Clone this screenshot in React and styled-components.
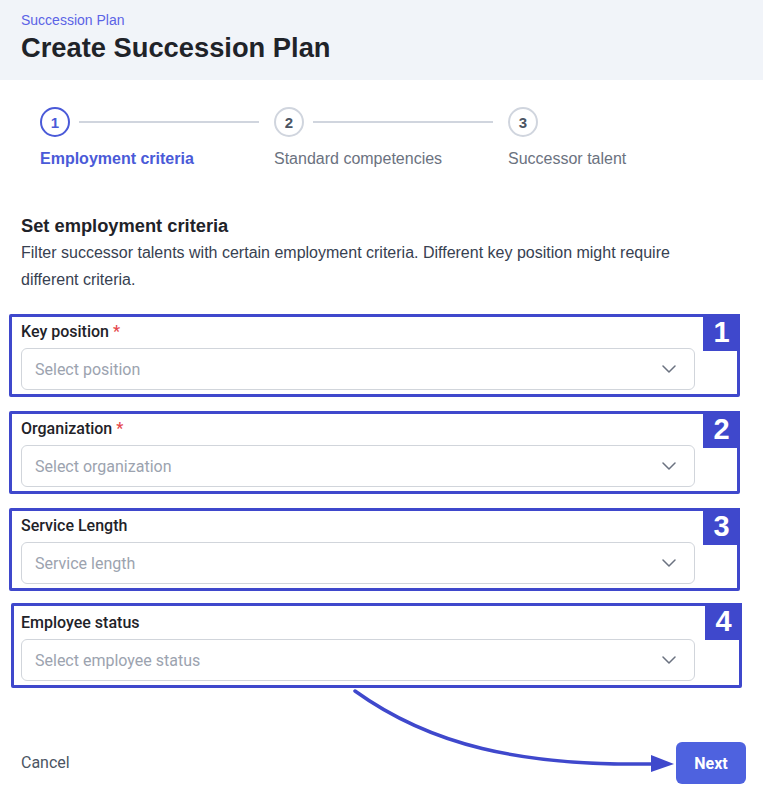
import React from "react";
import styled, { createGlobalStyle } from "styled-components";

const Global = createGlobalStyle`
  html, body { margin: 0; padding: 0; background: #ffffff; }
  * { box-sizing: border-box; }
`;

const ANNOT = "#3f48cc";
const PRIMARY = "#4a5ad8";

const Page = styled.div`
  position: relative;
  width: 763px;
  min-height: 803px;
  font-family: "Liberation Sans", Arial, sans-serif;
  color: #1f2329;
`;

const Header = styled.header`
  height: 80px;
  background: #f1f4f9;
  padding: 12px 21px 0;
`;

const Breadcrumb = styled.div`
  font-size: 14px;
  line-height: 17px;
  color: #5b63e6;
`;

const Title = styled.h1`
  margin: 3px 0 0;
  font-size: 27.3px;
  line-height: 32px;
  font-weight: 700;
  color: #1f2329;
`;

const Stepper = styled.div`
  display: flex;
  margin-top: 27px;
  padding-left: 40px;
`;

const Step = styled.div`
  width: 234px;
  display: flex;
  flex-direction: column;
`;

const StepTop = styled.div`
  display: flex;
  align-items: center;
`;

const Circle = styled.div`
  width: 30px;
  height: 30px;
  flex: none;
  border-radius: 50%;
  border: 2px solid ${(p) => (p.$active ? PRIMARY : "#d0d5de")};
  color: ${(p) => (p.$active ? PRIMARY : "#4b5563")};
  font-size: 15px;
  font-weight: 700;
  display: flex;
  align-items: center;
  justify-content: center;
`;

const Connector = styled.div`
  height: 2px;
  width: 180px;
  margin-left: 9px;
  background: #d0d5de;
`;

const StepLabel = styled.div`
  margin-top: 12px;
  font-size: 16px;
  line-height: 20px;
  font-weight: ${(p) => (p.$active ? 700 : 400)};
  color: ${(p) => (p.$active ? PRIMARY : "#6b7280")};
`;

const Section = styled.section`
  padding: 0 21px;
  margin-top: 46px;
`;

const SectionTitle = styled.h2`
  margin: 0;
  font-size: 18.3px;
  line-height: 22px;
  font-weight: 700;
  color: #1f2329;
`;

const Description = styled.p`
  margin: 2px 0 0;
  max-width: 700px;
  font-size: 16px;
  line-height: 27px;
  color: #374151;
`;

const Form = styled.div`
  margin-top: 29px;
  width: 674px;
  display: flex;
  flex-direction: column;
  gap: 29px;
`;

const Field = styled.div`
  position: relative;
  display: flex;
  flex-direction: column;
  gap: 6px;
`;

const Label = styled.label`
  font-family: Roboto, "Liberation Sans", sans-serif;
  font-size: 16px;
  line-height: 20px;
  font-weight: 500;
  color: #1f2329;
`;

const Required = styled.span`
  color: #e5484d;
  margin-left: 4px;
`;

const Select = styled.div`
  height: 42px;
  border: 1px solid #d1d5db;
  border-radius: 6px;
  padding: 0 18px 0 13px;
  display: flex;
  align-items: center;
  justify-content: space-between;
  font-family: Roboto, "Liberation Sans", sans-serif;
  font-size: 16px;
  color: #9ca3af;
  background: #fff;
`;

const Annotation = styled.div`
  position: absolute;
  top: ${(p) => -8 - (p.$dy || 0)}px;
  bottom: -7px;
  left: ${(p) => -12 + (p.$dx || 0)}px;
  right: ${(p) => -45 - (p.$dx || 0)}px;
  border: 3px solid ${ANNOT};
  border-radius: 2px;
  pointer-events: none;
`;

const Badge = styled.div`
  position: absolute;
  top: -3px;
  right: -3px;
  width: 37px;
  height: 37px;
  background: ${ANNOT};
  color: #fff;
  font-family: "Liberation Sans", Arial, sans-serif;
  font-weight: 700;
  font-size: 29px;
  display: flex;
  align-items: center;
  justify-content: center;
`;

const Footer = styled.div`
  margin-top: 61px;
  display: flex;
  align-items: center;
  justify-content: space-between;
  padding: 0 17px 0 21px;
`;

const CancelButton = styled.button`
  border: none;
  background: none;
  padding: 0;
  margin-top: -2px;
  font-family: Roboto, "Liberation Sans", sans-serif;
  font-size: 16px;
  color: #4b5563;
`;

const NextButton = styled.button`
  width: 70px;
  height: 42px;
  border: none;
  border-radius: 6px;
  background: #4e62df;
  color: #fff;
  font-family: Roboto, "Liberation Sans", sans-serif;
  font-weight: 700;
  font-size: 16px;
`;

const ArrowLayer = styled.svg`
  position: absolute;
  left: 0;
  top: 0;
  pointer-events: none;
`;

const Chevron = () => (
  <svg width="14" height="8" viewBox="0 0 14 8" fill="none">
    <path d="M1 1l6 6 6-6" stroke="#6b7280" strokeWidth="1.5" strokeLinecap="round" strokeLinejoin="round" />
  </svg>
);

const steps = [
  { n: 1, label: "Employment criteria", active: true },
  { n: 2, label: "Standard competencies" },
  { n: 3, label: "Successor talent", last: true },
];

const fields = [
  { label: "Key position", required: true, placeholder: "Select position" },
  { label: "Organization", required: true, placeholder: "Select organization" },
  { label: "Service Length", placeholder: "Service length" },
  { label: "Employee status", placeholder: "Select employee status", dx: 2, dy: 2 },
];

export default function App() {
  return (
    <Page>
      <Global />
      <Header>
        <Breadcrumb>Succession Plan</Breadcrumb>
        <Title>Create Succession Plan</Title>
      </Header>

      <Stepper>
        {steps.map((s) => (
          <Step key={s.n}>
            <StepTop>
              <Circle $active={s.active}>{s.n}</Circle>
              {!s.last && <Connector />}
            </StepTop>
            <StepLabel $active={s.active}>{s.label}</StepLabel>
          </Step>
        ))}
      </Stepper>

      <Section>
        <SectionTitle>Set employment criteria</SectionTitle>
        <Description>
          Filter successor talents with certain employment criteria. Different key position might require
          different criteria.
        </Description>

        <Form>
          {fields.map((f, i) => (
            <Field key={f.label}>
              <Label>
                {f.label}
                {f.required && <Required>*</Required>}
              </Label>
              <Select>
                <span>{f.placeholder}</span>
                <Chevron />
              </Select>
              <Annotation $dx={f.dx} $dy={f.dy}>
                <Badge>{i + 1}</Badge>
              </Annotation>
            </Field>
          ))}
        </Form>
      </Section>

      <Footer>
        <CancelButton>Cancel</CancelButton>
        <NextButton>Next</NextButton>
      </Footer>

      <ArrowLayer width="763" height="803" viewBox="0 0 763 803">
        <path
          d="M355 691 C 430 745, 520 766, 652 764"
          fill="none"
          stroke={ANNOT}
          strokeWidth="3.5"
          strokeLinecap="round"
        />
        <path d="M651 755 L674 764 L651 772 Z" fill={ANNOT} />
      </ArrowLayer>
    </Page>
  );
}
